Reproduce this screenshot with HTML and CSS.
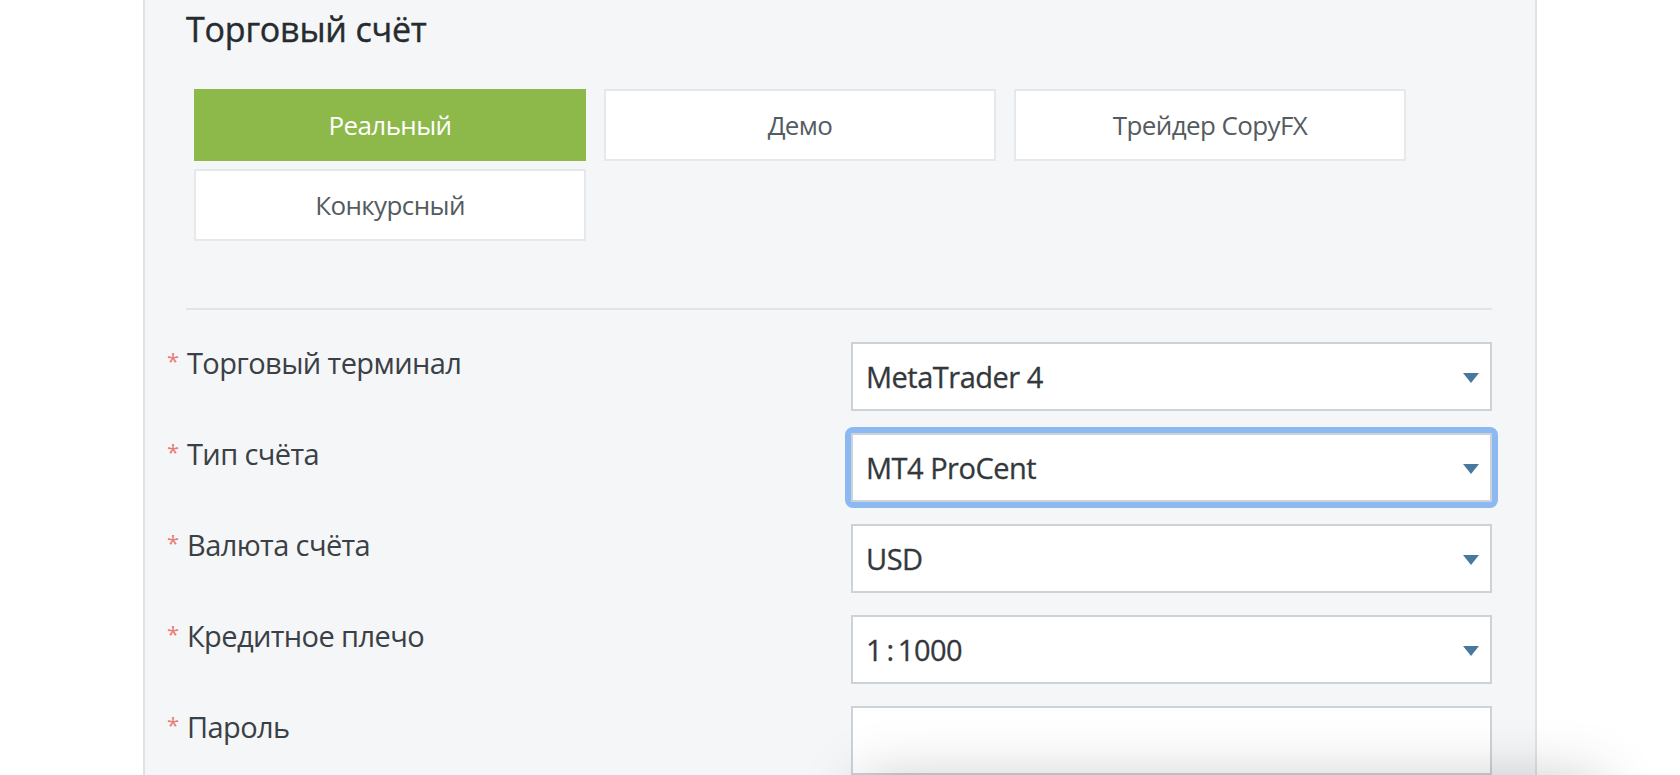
FILE: index.html
```html
<!DOCTYPE html>
<html lang="ru">
<head>
<meta charset="utf-8">
<title>Торговый счёт</title>
<link rel="stylesheet" href="styles.css">
</head>
<body>
<div class="page">
  <section class="panel">
    <h2 class="title">Торговый счёт</h2>
    <div class="tabs">
      <div class="tab active">Реальный</div>
      <div class="tab">Демо</div>
      <div class="tab">Трейдер CopyFX</div>
      <div class="tab">Конкурсный</div>
    </div>
    <div class="divider"></div>
    <div class="form">
      <div class="row">
        <div class="label"><span class="req">*</span>Торговый терминал</div>
        <div class="select"><span class="value">MetaTrader 4</span><svg class="caret" viewBox="0 0 16 10" width="16" height="10"><polygon points="0,0 16,0 8,10"/></svg></div>
      </div>
      <div class="row">
        <div class="label"><span class="req">*</span>Тип счёта</div>
        <div class="select focused"><span class="value">MT4 ProCent</span><svg class="caret" viewBox="0 0 16 10" width="16" height="10"><polygon points="0,0 16,0 8,10"/></svg></div>
      </div>
      <div class="row">
        <div class="label"><span class="req">*</span>Валюта счёта</div>
        <div class="select"><span class="value">USD</span><svg class="caret" viewBox="0 0 16 10" width="16" height="10"><polygon points="0,0 16,0 8,10"/></svg></div>
      </div>
      <div class="row">
        <div class="label"><span class="req">*</span>Кредитное плечо</div>
        <div class="select"><span class="value">1&#8201;:&#8201;1000</span><svg class="caret" viewBox="0 0 16 10" width="16" height="10"><polygon points="0,0 16,0 8,10"/></svg></div>
      </div>
      <div class="row">
        <div class="label"><span class="req">*</span>Пароль</div>
        <div class="select input"></div>
      </div>
    </div>
  </section>
</div>
<div class="below-shadow"></div>
</body>
</html>
```

FILE: styles.css
```css
html, body {
  margin: 0;
  padding: 0;
  background: #ffffff;
  height: 775px;
  overflow: hidden;
  font-family: "Open Sans", "Noto Sans", sans-serif;
}

.page {
  height: 775px;
  overflow: hidden;
}

.panel {
  margin-left: 143px;
  width: 1394px;
  min-height: 775px;
  box-sizing: border-box;
  border-left: 2px solid #dde4e9;
  border-right: 2px solid #dde4e9;
  background: #f5f6f8;
  padding: 7px 43px 0 41px;
}

.title {
  margin: 0;
  font-size: 34px;
  line-height: 44px;
  font-weight: 400;
  color: #262b2f;
  letter-spacing: -0.2px;
  -webkit-text-stroke: 0.4px #262b2f;
}

.tabs {
  margin-top: 38px;
  padding-left: 8px;
  display: grid;
  grid-template-columns: repeat(3, 392px);
  column-gap: 18px;
  row-gap: 8px;
}

.tab {
  height: 72px;
  box-sizing: border-box;
  border: 2px solid #e6e9ec;
  background: #ffffff;
  display: flex;
  align-items: center;
  justify-content: center;
  font-size: 26px;
  letter-spacing: -0.6px;
  color: #555b60;
}

.tab.active {
  background: #8db84a;
  border-color: #8db84a;
  color: #ffffff;
}

.divider {
  margin-top: 67px;
  height: 2px;
  background: #dfe5ea;
}

.form {
  margin-top: 32px;
  display: grid;
  row-gap: 22px;
}

.row {
  display: grid;
  grid-template-columns: 665px 1fr;
  height: 69px;
}

.label {
  display: flex;
  align-items: flex-start;
  padding-left: 1px;
  font-size: 29px;
  line-height: 42px;
  letter-spacing: -0.6px;
  color: #3a4045;
}

.req {
  flex: none;
  width: 20px;
  margin-left: -20px;
  font-size: 22px;
  line-height: 22px;
  margin-top: 7px;
  letter-spacing: 0;
  color: #e87b73;
}

.select {
  box-sizing: border-box;
  height: 69px;
  border: 2px solid #ccd2d7;
  background: #ffffff;
  display: flex;
  align-items: center;
  justify-content: space-between;
  padding: 0 11px 0 13px;
  font-size: 29px;
  font-weight: 400;
  letter-spacing: -0.5px;
  color: #33383c;
  -webkit-text-stroke: 0.3px #33383c;
}

.select.focused {
  outline: 6px solid #8cb9f2;
  border-radius: 2px;
}

.caret {
  flex: none;
  fill: #47799f;
  margin-top: 3px;
}

.below-shadow {
  position: fixed;
  left: 880px;
  top: 800px;
  width: 700px;
  height: 100px;
  background: #ffffff;
  box-shadow: 0 0 60px 20px rgba(0, 0, 0, 0.22);
}
```
